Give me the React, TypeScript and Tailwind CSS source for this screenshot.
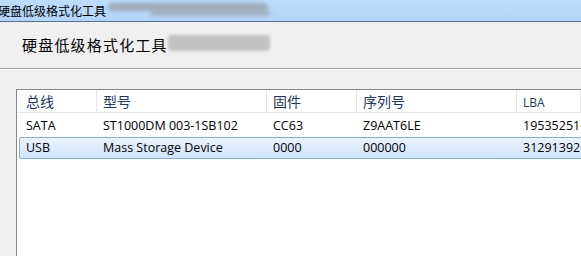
import React from "react";

const cjk = { fontFamily: '"Noto Sans CJK SC", "Noto Sans", sans-serif' };
const ui = { fontFamily: '"Open Sans", "Noto Sans CJK SC", sans-serif' };

const cols = "grid grid-cols-[80px_170px_90px_160px_1fr]";
const selCols = "grid grid-cols-[77px_170px_90px_160px_1fr]";

export default function App() {
  const headers = ["总线", "型号", "固件", "序列号", "LBA"];
  const rows = [
    ["SATA", "ST1000DM 003-1SB102", "CC63", "Z9AAT6LE", "1953525168"],
    ["USB", "Mass Storage Device", "0000", "000000", "31291392"],
  ];
  return (
    <div className="w-[581px] h-[256px] bg-[#f0f0f0] overflow-hidden flex flex-col">
      <div className="h-[21px] shrink-0 bg-gradient-to-b from-[#bddcfb] to-[#b2d5fa] flex items-center relative">
        <span className="-ml-[2px] text-[12px] leading-none text-black" style={cjk}>
          硬盘低级格式化工具
        </span>
        <div className="absolute left-[108px] top-[3px] w-[160px] h-[8px] rounded bg-[#9aa4ae] blur-[2px] opacity-90" />
        <div className="absolute left-[150px] top-[10px] w-[120px] h-[6px] rounded bg-[#9aa4ae] blur-[2px] opacity-80" />
      </div>
      <div className="h-px shrink-0 bg-[#5c6f8a]" />
      <div className="h-[46px] shrink-0 flex items-center pl-[22px] relative">
        <span className="text-[15px] leading-none tracking-[1.2px] text-black mt-[-2px]" style={cjk}>
          硬盘低级格式化工具
        </span>
        <div className="absolute left-[168px] top-[13px] w-[102px] h-[16px] rounded bg-[#c2c2c2] blur-[1.5px]" />
      </div>
      <div className="h-px shrink-0 bg-[#a0a0a0]" />
      <div className="h-px shrink-0 bg-white" />
      <div className="h-[19px] shrink-0" />
      <div className="flex-1 ml-[16px] border-l border-t border-[#828790] bg-white flex flex-col">
        <div className={`${cols} h-[23px] border-b border-[#e5e5e5]`}>
          {headers.map((h, i) => (
            <div
              key={h}
              className={`flex items-center border-r border-[#e5e5e5] ${i === 0 ? "pl-[9px]" : "pl-[6px]"}`}
            >
              <span
                className={i === 4 ? "text-[12px] text-[#1e395b] mt-[4px]" : "text-[14px] text-[#1e395b]"}
                style={i === 4 ? ui : cjk}
              >
                {h}
              </span>
            </div>
          ))}
        </div>
        <div className={`${cols} h-[24px]`}>
          {rows[0].map((c, i) => (
            <div key={i} className={`flex items-center pt-[3px] ${i === 0 ? "pl-[9px]" : "pl-[6px]"}`}>
              <span className="text-[12.5px] text-black whitespace-nowrap" style={ui}>{c}</span>
            </div>
          ))}
        </div>
        <div className={`${selCols} h-[22px] ml-[2px] -mr-[4px] rounded-[2px] border border-[#84acdd] bg-gradient-to-b from-[#eaf3fe] to-[#cfe4fb]`}>
          {rows[1].map((c, i) => (
            <div key={i} className={`flex items-center ${i === 0 ? "pl-[6px]" : "pl-[6px]"}`}>
              <span className="text-[12.5px] text-black whitespace-nowrap" style={ui}>{c}</span>
            </div>
          ))}
        </div>
      </div>
    </div>
  );
}
